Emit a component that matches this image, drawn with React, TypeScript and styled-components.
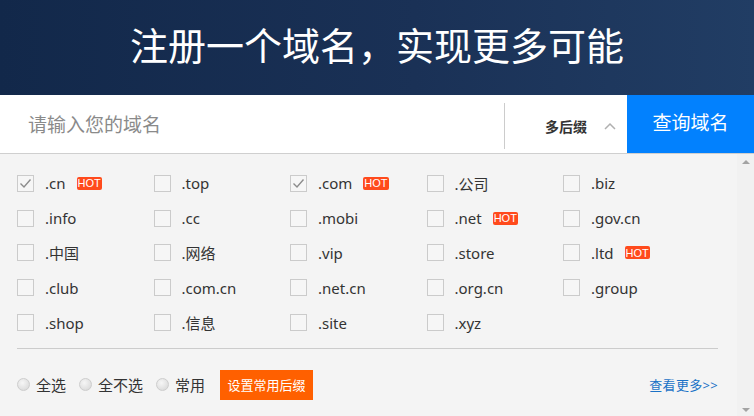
import React from "react";
import styled, { createGlobalStyle } from "styled-components";

const GlobalStyle = createGlobalStyle`
  html, body {
    margin: 0;
    padding: 0;
    background: #f4f4f4;
    font-family: "Noto Sans", "Noto Sans CJK SC", sans-serif;
  }
`;

const Page = styled.div({
  width: "754px",
  height: "416px",
  display: "flex",
  flexDirection: "column",
  overflow: "hidden",
});

const Banner = styled.div({
  height: "95px",
  display: "flex",
  alignItems: "center",
  justifyContent: "center",
  paddingBottom: "8px",
  boxSizing: "border-box",
  background: "linear-gradient(90deg, #12284a 0%, #1a3156 55%, #213d64 100%)",
});

const Title = styled.h1({
  margin: 0,
  color: "#ffffff",
  fontSize: "38px",
  fontWeight: 400,
  fontFamily: "\"Noto Sans CJK SC\", sans-serif",
});

const SearchBar = styled.div({
  height: "59px",
  display: "flex",
  background: "#ffffff",
  borderBottom: "1px solid #cfcfcf",
  boxSizing: "border-box",
});

const InputArea = styled.div({
  flex: 1,
  display: "flex",
  alignItems: "center",
  paddingLeft: "28px",
  fontSize: "19px",
  color: "#8a8a8a",
});

const SuffixToggle = styled.div({
  width: "123px",
  margin: "8px 0 4px",
  borderLeft: "1px solid #cccccc",
  display: "flex",
  alignItems: "center",
  paddingLeft: "40px",
  boxSizing: "border-box",
  gap: "17px",
  fontSize: "14px",
  fontWeight: 700,
  color: "#333333",
});

const SearchButton = styled.button({
  width: "127px",
  border: "none",
  background: "#0281fe",
  color: "#ffffff",
  fontSize: "19px",
  fontFamily: "inherit",
  padding: "0 0 4px",
  cursor: "pointer",
});

const Panel = styled.div({
  flex: 1,
  display: "flex",
  background: "#f4f4f4",
});

const Content = styled.div({
  flex: 1,
  padding: "12px 19px 0 17px",
});

const Grid = styled.div({
  display: "grid",
  gridTemplateColumns: "repeat(5, 136.5px)",
  gridAutoRows: "34.8px",
  alignItems: "center",
});

const Option = styled.label({
  display: "flex",
  alignItems: "center",
  fontSize: "15px",
  color: "#333333",
});

const Box = styled.span({
  width: "17px",
  height: "17px",
  boxSizing: "border-box",
  border: "1px solid #cbcbcb",
  background: "#f6f6f6",
  marginRight: "11px",
  display: "flex",
  alignItems: "center",
  justifyContent: "center",
});

const Hot = styled.span({
  marginLeft: "11px",
  background: "#ff4a1c",
  color: "#ffffff",
  fontSize: "11px",
  padding: "0 1px",
  borderRadius: "2px",
  fontFamily: "\"Liberation Sans\", sans-serif",
  height: "13px",
  display: "flex",
  alignItems: "center",
});

const Divider = styled.div({
  height: "1px",
  background: "#cccccc",
  marginTop: "8px",
});

const Footer = styled.div({
  display: "flex",
  alignItems: "center",
  justifyContent: "space-between",
  marginTop: "21px",
  height: "30px",
});

const Choices = styled.div({
  display: "flex",
  alignItems: "center",
});

const Radio = styled.label({
  display: "flex",
  alignItems: "center",
  fontSize: "15px",
  color: "#333333",
  marginRight: "13px",
});

const Dot = styled.span({
  width: "13px",
  height: "13px",
  borderRadius: "50%",
  boxSizing: "border-box",
  border: "1px solid #cdcdcd",
  background: "radial-gradient(circle at 40% 35%, #f6f6f6 0%, #e2e2e2 60%, #d2d2d2 100%)",
  marginRight: "6px",
});

const PresetButton = styled.button({
  height: "30px",
  width: "93px",
  marginLeft: "2px",
  border: "none",
  background: "#ff6000",
  color: "#ffffff",
  fontSize: "13px",
  fontFamily: "inherit",
  padding: 0,
});

const MoreLink = styled.a({
  color: "#1a72c6",
  fontSize: "13px",
  textDecoration: "none",
  letterSpacing: "0.3px",
});

const Scrollbar = styled.div({
  width: "17px",
  background: "#f1f1f1",
  display: "flex",
  flexDirection: "column",
  justifyContent: "space-between",
  alignItems: "center",
  padding: "6px 0 4px",
  boxSizing: "border-box",
});

const Arrow = styled.span<{ $down?: boolean }>(({ $down }) => ({
  width: 0,
  height: 0,
  borderLeft: "4px solid transparent",
  borderRight: "4px solid transparent",
  [$down ? "borderTop" : "borderBottom"]: "4px solid #a3a3a3",
}));

const domains: { name: string; hot?: boolean; checked?: boolean }[] = [
  { name: ".cn", hot: true, checked: true },
  { name: ".top" },
  { name: ".com", hot: true, checked: true },
  { name: ".公司" },
  { name: ".biz" },
  { name: ".info" },
  { name: ".cc" },
  { name: ".mobi" },
  { name: ".net", hot: true },
  { name: ".gov.cn" },
  { name: ".中国" },
  { name: ".网络" },
  { name: ".vip" },
  { name: ".store" },
  { name: ".ltd", hot: true },
  { name: ".club" },
  { name: ".com.cn" },
  { name: ".net.cn" },
  { name: ".org.cn" },
  { name: ".group" },
  { name: ".shop" },
  { name: ".信息" },
  { name: ".site" },
  { name: ".xyz" },
];

export default function App() {
  return (
    <Page>
      <GlobalStyle />
      <Banner>
        <Title>注册一个域名，实现更多可能</Title>
      </Banner>
      <SearchBar>
        <InputArea>请输入您的域名</InputArea>
        <SuffixToggle>
          多后缀
          <svg width="12" height="8" viewBox="0 0 12 8">
            <polyline points="1,7 6,2 11,7" fill="none" stroke="#b0b0b0" strokeWidth="1.5" />
          </svg>
        </SuffixToggle>
        <SearchButton>查询域名</SearchButton>
      </SearchBar>
      <Panel>
        <Content>
          <Grid>
            {domains.map((d) => (
              <Option key={d.name}>
                <Box>
                  {d.checked && (
                    <svg width="13" height="11" viewBox="0 0 13 11">
                      <polyline points="1.5,5.5 5,9 11.5,1.5" fill="none" stroke="#8c8c8c" strokeWidth="1.4" />
                    </svg>
                  )}
                </Box>
                {d.name}
                {d.hot && <Hot>HOT</Hot>}
              </Option>
            ))}
          </Grid>
          <Divider />
          <Footer>
            <Choices>
              <Radio><Dot />全选</Radio>
              <Radio><Dot />全不选</Radio>
              <Radio><Dot />常用</Radio>
              <PresetButton>设置常用后缀</PresetButton>
            </Choices>
            <MoreLink href="#">查看更多&gt;&gt;</MoreLink>
          </Footer>
        </Content>
        <Scrollbar>
          <Arrow />
          <Arrow $down />
        </Scrollbar>
      </Panel>
    </Page>
  );
}
